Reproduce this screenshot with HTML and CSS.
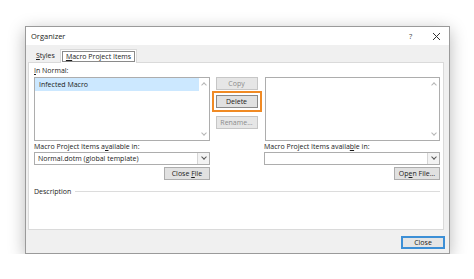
FILE: index.html
```html
<!DOCTYPE html>
<html lang="en">
<head>
    <meta charset="UTF-8">
    <meta name="viewport" content="width=device-width, initial-scale=1.0">
    <title>Organizer</title>
    <link rel="stylesheet" href="styles.css">
</head>
<body>
    <div class="dialog">
        <div class="titlebar">
            <span class="title">Organizer</span>
            <span class="help">?</span>
            <span class="close-x">
                <svg width="9" height="9" viewBox="0 0 9 9"><path d="M1 1L8 8M8 1L1 8" stroke="#333" stroke-width="1"/></svg>
            </span>
        </div>
        <div class="body">
            <div class="tabs">
                <span class="tab"><u>S</u>tyles</span>
                <span class="tab active"><span class="focus"><u>M</u>acro Project Items</span></span>
            </div>
            <div class="panel">
                <div class="label"><u>I</u>n Normal:</div>
                <div class="lists">
                    <div class="listbox">
                        <div class="items">
                            <div class="item selected">Infected Macro</div>
                        </div>
                        <div class="scroll">
                            <span class="arrow up"></span>
                            <span class="arrow down"></span>
                        </div>
                    </div>
                    <div class="actions">
                        <button class="btn" disabled>Copy</button>
                        <button class="btn highlight">Delete</button>
                        <button class="btn" disabled>Rename...</button>
                    </div>
                    <div class="listbox">
                        <div class="items"></div>
                        <div class="scroll">
                            <span class="arrow up"></span>
                            <span class="arrow down"></span>
                        </div>
                    </div>
                </div>
                <div class="sources">
                    <div class="source">
                        <div class="label">Macro Project Items a<u>v</u>ailable in:</div>
                        <div class="combo">
                            <span class="value">Normal.dotm (global template)</span>
                            <span class="drop"><span class="arrow down"></span></span>
                        </div>
                        <div class="source-btn"><button class="btn">Close <u>F</u>ile</button></div>
                    </div>
                    <div class="source">
                        <div class="label">Macro Project Items availa<u>b</u>le in:</div>
                        <div class="combo">
                            <span class="value"></span>
                            <span class="drop"><span class="arrow down"></span></span>
                        </div>
                        <div class="source-btn"><button class="btn">Op<u>e</u>n File...</button></div>
                    </div>
                </div>
                <div class="description">
                    <span>Description</span>
                    <span class="rule"></span>
                </div>
            </div>
            <div class="footer">
                <button class="btn default">Close</button>
            </div>
        </div>
    </div>
</body>
</html>
```
FILE: styles.css
```css
body {
    margin: 0;
    background: #fff;
    font-family: "Open Sans", "Noto Sans", sans-serif;
    font-size: 7px;
    color: #1a1a1a;
}
.dialog {
    width: 425px;
    height: 228px;
    margin: 26px 0 0 25px;
    box-sizing: border-box;
    border: 1px solid #9a9a9a;
    background: #f0f0f0;
    box-shadow: 0 4px 16px rgba(0, 0, 0, 0.28);
    display: flex;
    flex-direction: column;
}
.titlebar {
    height: 18px;
    background: #fff;
    display: flex;
    align-items: center;
    padding-left: 5px;
    font-size: 7.5px;
}
.title {
    flex: 1;
}
.help {
    width: 27px;
    text-align: center;
    color: #444;
}
.close-x {
    width: 25px;
    display: flex;
    justify-content: center;
}
.body {
    flex: 1;
    display: flex;
    flex-direction: column;
}
.tabs {
    height: 17px;
    display: flex;
    align-items: flex-end;
    padding-left: 5px;
}
.tab {
    height: 12px;
    line-height: 12px;
    padding: 0 5px;
}
.tab.active {
    height: 13px;
    background: #fff;
    border: 1px solid #dadada;
    border-bottom: none;
    padding: 0 1px;
    display: flex;
    align-items: center;
    margin-bottom: -1px;
    position: relative;
}
.focus {
    border: 1px solid #8a8a8a;
    line-height: 9px;
    padding: 0 3px;
}
.panel {
    height: 168px;
    margin: 0 5px 0 2px;
    box-sizing: border-box;
    background: #fff;
    border: 1px solid #dadada;
    padding: 3px 3px 0 5px;
}
.label {
    height: 10px;
    line-height: 10px;
}
.lists {
    display: flex;
    margin-top: 1px;
}
.listbox {
    width: 176px;
    height: 64px;
    box-sizing: border-box;
    border: 1px solid #adadad;
    display: flex;
}
.items {
    flex: 1;
}
.item {
    height: 13px;
    line-height: 13px;
    padding-left: 4px;
}
.item.selected {
    background: #cce8ff;
}
.scroll {
    width: 10px;
    display: flex;
    flex-direction: column;
    justify-content: space-between;
    align-items: center;
    padding: 4px 0;
}
.arrow {
    width: 3px;
    height: 3px;
    border-left: 1px solid #b5b5b5;
    border-top: 1px solid #b5b5b5;
}
.arrow.up {
    transform: rotate(45deg);
    margin-top: 1px;
}
.arrow.down {
    transform: rotate(225deg);
    margin-bottom: 1px;
}
.actions {
    width: 42px;
    margin: 0 7px 0 6px;
    display: flex;
    flex-direction: column;
}
.btn {
    height: 13px;
    padding: 0;
    font-family: inherit;
    font-size: 7px;
    color: #1a1a1a;
    background: #e1e1e1;
    border: 1px solid #adadad;
    box-sizing: border-box;
    line-height: 11px;
}
.btn:disabled {
    color: #8c8c8c;
    background: #e6e6e6;
    border-color: #c6c6c6;
}
.actions .btn {
    width: 42px;
}
.btn.highlight {
    margin: 5px 0 8px;
    outline: 2px solid #f08a24;
    outline-offset: 2px;
    border-color: #8a8a8a;
}
.sources {
    display: flex;
    justify-content: space-between;
    margin-top: 1px;
}
.source {
    width: 176px;
}
.combo {
    height: 13px;
    box-sizing: border-box;
    border: 1px solid #adadad;
    display: flex;
    align-items: center;
}
.value {
    flex: 1;
    padding-left: 3px;
}
.drop {
    width: 11px;
    height: 11px;
    border-left: 1px solid #d5d5d5;
    background: #f3f3f3;
    display: flex;
    justify-content: center;
    align-items: center;
}
.drop .arrow {
    border-color: #555;
    margin-top: -2px;
}
.source-btn {
    display: flex;
    justify-content: flex-end;
    margin-top: 2px;
}
.source-btn .btn {
    width: 46px;
}
.description {
    display: flex;
    align-items: center;
    height: 10px;
    margin-top: 6px;
}
.rule {
    flex: 1;
    height: 1px;
    background: #dcdcdc;
    margin: 0 0 0 4px;
}
.footer {
    flex: 1;
    display: flex;
    justify-content: flex-end;
    align-items: flex-start;
    padding: 6px 4px 0 0;
}
.btn.default {
    width: 44px;
    border: 2px solid #3c8fd6;
    background: #e5e5e5;
    line-height: 9px;
}
```
